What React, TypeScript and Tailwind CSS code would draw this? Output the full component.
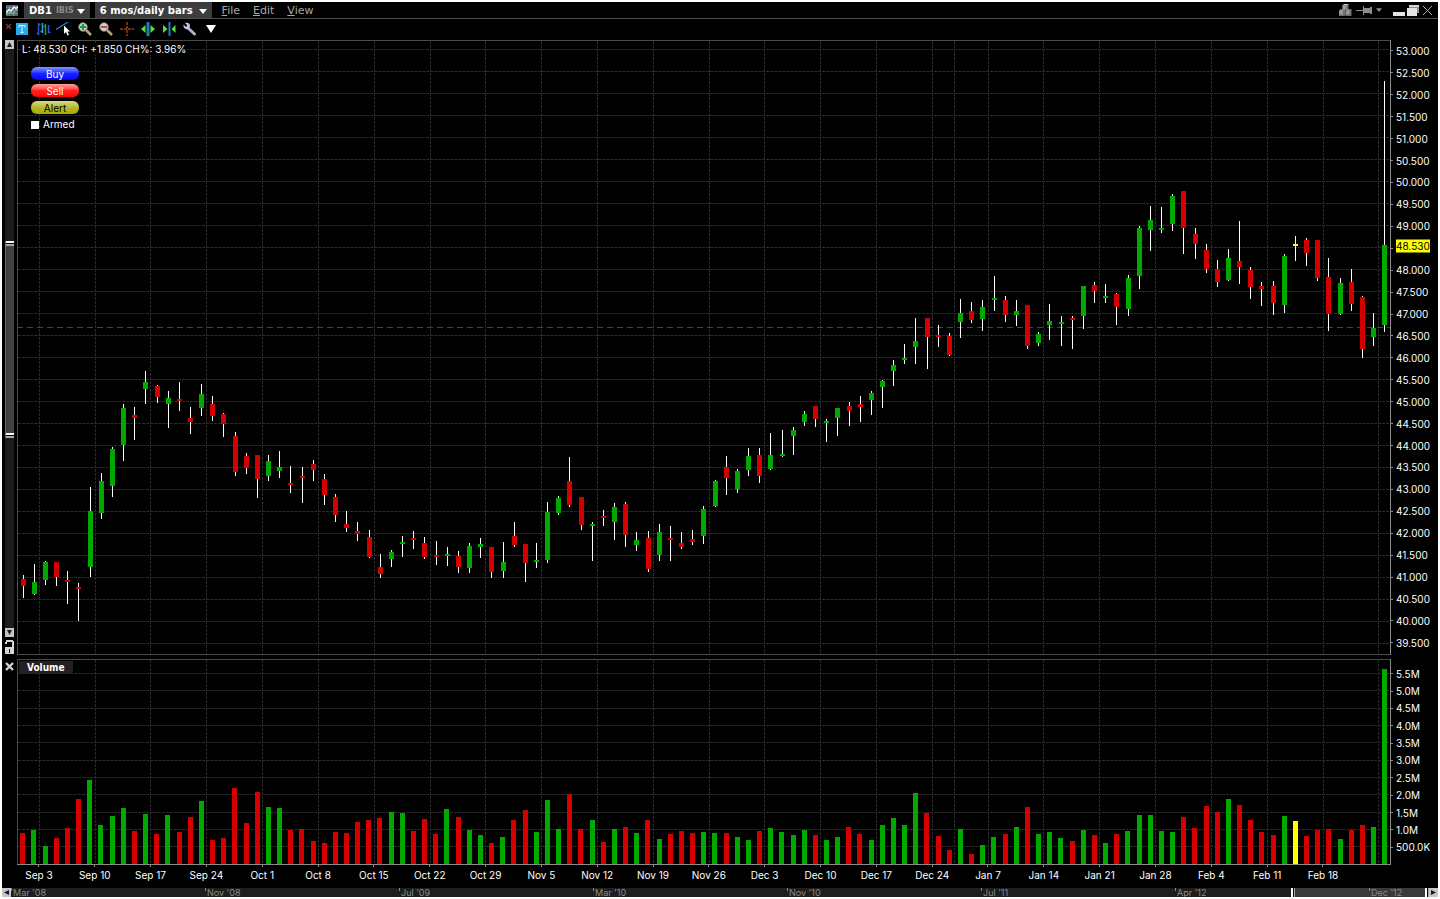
import type { ReactNode } from "react";
import clsx from "clsx";

type Tone = "g" | "r" | "y";
type Candle = [high: number, top: number, bottom: number, low: number, tone: Tone];

const TONES: Record<Tone, string> = { g: "#00a800", r: "#d40000", y: "#ffff00" };

const CANDLES: Candle[] = [
  [575, 579, 586, 598, "r"], [564, 582, 594, 595, "g"], [561, 562, 580, 585, "g"], [562, 562, 577, 586, "r"],
  [571, 580, 582, 604, "r"], [583, 587, 589, 621, "r"], [487, 511, 567, 577, "g"], [473, 481, 513, 519, "g"],
  [447, 449, 486, 497, "g"], [404, 408, 445, 461, "g"], [407, 415, 418, 440, "r"], [371, 382, 389, 404, "g"],
  [385, 386, 397, 403, "r"], [391, 398, 404, 428, "g"], [382, 399, 401, 411, "r"], [407, 418, 422, 434, "r"],
  [384, 394, 408, 416, "g"], [396, 404, 416, 421, "r"], [413, 414, 424, 437, "r"], [432, 436, 472, 476, "r"],
  [453, 456, 468, 474, "r"], [455, 455, 479, 498, "r"], [455, 461, 476, 481, "g"], [451, 467, 471, 478, "g"],
  [466, 483, 485, 493, "r"], [467, 476, 478, 503, "r"], [460, 464, 470, 481, "r"], [474, 479, 495, 505, "r"],
  [494, 497, 515, 522, "r"], [511, 524, 528, 532, "r"], [522, 531, 534, 541, "r"], [530, 537, 557, 558, "r"],
  [554, 567, 574, 578, "r"], [550, 552, 559, 567, "g"], [536, 542, 544, 557, "g"], [531, 538, 540, 549, "r"],
  [537, 543, 557, 559, "r"], [541, 555, 557, 565, "r"], [547, 554, 556, 566, "g"], [551, 556, 567, 573, "r"],
  [543, 546, 568, 573, "g"], [538, 544, 547, 558, "g"], [547, 547, 572, 578, "r"], [542, 562, 571, 578, "g"],
  [522, 536, 545, 547, "r"], [544, 544, 563, 582, "r"], [543, 560, 562, 568, "g"], [502, 512, 560, 563, "g"],
  [496, 498, 513, 515, "g"], [457, 481, 505, 507, "r"], [497, 497, 525, 530, "r"], [522, 524, 526, 561, "g"],
  [510, 516, 518, 526, "r"], [503, 507, 522, 540, "g"], [502, 504, 535, 547, "r"], [532, 540, 545, 551, "g"],
  [531, 538, 569, 572, "r"], [524, 532, 555, 561, "g"], [526, 538, 540, 561, "r"], [532, 543, 547, 549, "r"],
  [530, 539, 542, 545, "r"], [506, 509, 536, 544, "g"], [480, 481, 506, 507, "g"], [456, 467, 478, 495, "r"],
  [469, 471, 489, 493, "g"], [448, 456, 470, 476, "g"], [448, 455, 476, 483, "r"], [433, 455, 469, 470, "g"],
  [430, 454, 456, 457, "g"], [427, 430, 436, 455, "g"], [411, 414, 422, 426, "g"], [406, 406, 419, 427, "r"],
  [419, 421, 423, 442, "g"], [408, 408, 418, 436, "g"], [402, 406, 411, 426, "r"], [396, 404, 407, 422, "r"],
  [391, 393, 400, 415, "g"], [380, 381, 387, 408, "g"], [360, 365, 371, 386, "g"], [344, 358, 360, 364, "g"],
  [318, 341, 347, 364, "g"], [318, 318, 337, 369, "r"], [325, 335, 337, 347, "r"], [333, 336, 355, 356, "r"],
  [299, 313, 322, 338, "g"], [302, 311, 320, 323, "r"], [300, 307, 319, 331, "g"], [276, 298, 300, 311, "g"],
  [296, 300, 315, 322, "r"], [300, 311, 315, 326, "g"], [305, 305, 346, 349, "r"], [332, 334, 343, 346, "g"],
  [304, 321, 325, 340, "g"], [316, 322, 324, 346, "g"], [316, 318, 320, 349, "r"], [286, 286, 316, 329, "g"],
  [282, 285, 291, 303, "r"], [284, 296, 298, 303, "g"], [293, 294, 307, 325, "r"], [275, 278, 309, 316, "g"],
  [226, 228, 276, 289, "g"], [206, 220, 230, 251, "g"], [207, 228, 230, 233, "g"], [194, 196, 224, 231, "g"],
  [191, 191, 228, 254, "r"], [228, 234, 244, 259, "r"], [244, 250, 269, 273, "r"], [260, 269, 282, 287, "r"],
  [249, 258, 280, 281, "g"], [221, 261, 267, 284, "r"], [267, 270, 287, 299, "r"], [282, 286, 289, 306, "r"],
  [281, 286, 303, 315, "r"], [254, 256, 305, 313, "g"], [236, 244, 246, 261, "y"], [238, 240, 253, 266, "r"],
  [240, 240, 278, 281, "r"], [258, 277, 314, 331, "r"], [278, 283, 314, 315, "g"], [269, 282, 304, 311, "r"],
  [296, 297, 349, 358, "r"], [313, 328, 337, 346, "g"], [81, 245, 325, 332, "g"],
];

// top edge of every volume bar, same order as the candles
const VOLUMES = [
  833, 830, 846, 838, 828, 799, 780, 825, 816, 808, 831, 814, 834, 815, 832, 817, 801, 840, 838, 788,
  823, 792, 807, 808, 830, 829, 841, 843, 832, 833, 822, 820, 818, 812, 813, 831, 819, 834, 809, 817,
  830, 835, 843, 837, 820, 810, 832, 800, 829, 794, 829, 820, 842, 829, 827, 833, 820, 839, 834, 831,
  833, 832, 833, 833, 837, 840, 831, 828, 832, 835, 830, 835, 840, 837, 827, 834, 840, 825, 818, 825,
  793, 813, 836, 850, 829, 854, 845, 837, 834, 827, 807, 834, 832, 838, 841, 830, 835, 843, 834, 831,
  815, 815, 831, 832, 817, 828, 806, 812, 799, 805, 820, 832, 835, 816, 821, 836, 830, 829, 839, 830,
  825, 827, 669,
];
const VOLUME_TONES =
  "rggrrrggggrgrgrrgrrrrrggrrrrrrrrrggrrrgrggrgrrgggrrgrgrgrgrrrggrggrggggrggrrggggg" +
  "rrrgrggrgrgggrgrgrgggggrrrrgrrrrgyrrrgrrgg";

const DATES = [
  "Sep 3", "Sep 10", "Sep 17", "Sep 24", "Oct 1", "Oct 8", "Oct 15", "Oct 22", "Oct 29", "Nov 5", "Nov 12", "Nov 19",
  "Nov 26", "Dec 3", "Dec 10", "Dec 17", "Dec 24", "Jan 7", "Jan 14", "Jan 21", "Jan 28", "Feb 4", "Feb 11", "Feb 18",
];
const GRID_X = [
  39, 95, 150, 206, 262, 318, 374, 430, 485, 541, 597, 653, 709, 764, 820, 876, 932, 954, 988, 1043, 1099, 1155, 1211,
  1267, 1323, 1378,
];
const PRICES = Array.from({ length: 28 }, (_, i) => 53 - i * 0.5);
const PRICE_Y = PRICES.map((_, i) => Math.floor(49.7 + i * 21.98));
const VOLUME_LABELS = ["5.5M", "5.0M", "4.5M", "4.0M", "3.5M", "3.0M", "2.5M", "2.0M", "1.5M", "1.0M", "500.0K"];
const VOLUME_Y = VOLUME_LABELS.map((_, i) => Math.floor(673.5 + i * 17.33));
const HISTORY = ["Mar '08", "Nov '08", "Jul '09", "Mar '10", "Nov '10", "Jul '11", "Apr '12", "Dec '12"];

const LAST = 48.53;

function Grid({ ys, top, bottom }: { ys: number[]; top: number; bottom: number }) {
  return (
    <g stroke="#2a2a2a" strokeDasharray="3 1">
      {ys.map((y) => (
        <line key={y} x1={18} x2={1390} y1={y + 0.5} y2={y + 0.5} />
      ))}
      {GRID_X.map((x) => (
        <line key={x} x1={x + 0.5} x2={x + 0.5} y1={top} y2={bottom} />
      ))}
    </g>
  );
}

function PriceChart() {
  return (
    <svg
      viewBox="17 40 1374 615"
      preserveAspectRatio="none"
      shapeRendering="crispEdges"
      className="block h-full w-full"
      aria-label="Daily bars"
    >
      <Grid ys={PRICE_Y} top={41} bottom={654} />
      <line x1={17} x2={1390} y1={327.5} y2={327.5} stroke="#444" strokeDasharray="6 4" />
      {CANDLES.map(([high, top, bottom, low, tone], i) => {
        const x = Math.floor(23.1 + i * 11.161);
        return (
          <g key={i}>
            <rect x={x} y={high} width={1} height={low - high} fill="#fff" />
            <rect x={x - 2} y={top} width={5} height={bottom - top} fill={TONES[tone]} />
          </g>
        );
      })}
      <path d="M17.5 655V40.5H1390M17 654.5H1390" fill="none" stroke="#4a4a4a" />
      <path d="M1390.5 40V655" stroke="#8c8c8c" />
    </svg>
  );
}

function VolumeChart() {
  return (
    <svg
      viewBox="17 659 1374 206"
      preserveAspectRatio="none"
      shapeRendering="crispEdges"
      className="block h-full w-full"
      aria-label="Volume bars"
    >
      <Grid ys={VOLUME_Y} top={660} bottom={864} />
      {VOLUMES.map((y, i) => (
        <rect
          key={i}
          x={Math.floor(20.77 + i * 11.163)}
          y={y}
          width={5}
          height={864 - y}
          fill={TONES[VOLUME_TONES[i] as Tone]}
        />
      ))}
      <path d="M17.5 865V659.5H1390" fill="none" stroke="#4a4a4a" />
      <path d="M1390.5 659V865M17 864.5H1391" fill="none" stroke="#8c8c8c" />
    </svg>
  );
}

function Axis({ children, className }: { children: ReactNode; className?: string }) {
  return <div className={clsx("relative flex w-[47px] shrink-0 flex-col", className)}>{children}</div>;
}

function AxisLabel({ children, hidden }: { children: ReactNode; hidden?: boolean }) {
  return (
    <div className="flex min-h-0 flex-1 items-center gap-[3px]">
      <span className="h-px w-[2px] bg-[#8c8c8c]" />
      <span className={clsx("leading-3", hidden && "invisible")}>{children}</span>
    </div>
  );
}

function ToolButton({ label, children }: { label: string; children: ReactNode }) {
  return (
    <button aria-label={label} className="flex h-4 w-[21px] items-center justify-center">
      <svg width="16" height="14" viewBox="0 0 16 14">
        {children}
      </svg>
    </button>
  );
}

function Magnifier({ tone, plus }: { tone: string; plus?: boolean }) {
  return (
    <>
      <path d="M9 8l5 5" stroke="#b9a070" strokeWidth="2.600" />
      <circle cx="6" cy="5" r="4.200" fill="#cfd9d6" stroke="#858585" />
      <path d={plus ? "M3 5h6M6 2v6" : "M3 5h6"} stroke={tone} strokeWidth="2.200" />
    </>
  );
}

function Caret({ className, small }: { className?: string; small?: boolean }) {
  return (
    <svg width={small ? 6 : 8} height={small ? 4 : 5} viewBox="0 0 8 5" className={className}>
      <path d="M0 0h8L4 5z" fill="currentColor" />
    </svg>
  );
}

const TAB = "flex h-4 items-center bg-[#3d3d3d] pt-[2px] text-[10px] font-bold text-white";

function Header() {
  return (
    <header className="flex h-[17px] shrink-0 items-center border-b border-[#4f4f4f] pl-1 font-['DejaVu_Sans',sans-serif] text-[11px] leading-4">
      <svg width="12" height="11" viewBox="0 0 12 11" className="mr-[6px]">
        <rect width="12" height="11" fill="#4f6470" />
        <path d="M0 2.500h12M0 5.500h12M0 8.500h12M3.500 0v11M7.500 0v11" stroke="#8ba0aa" strokeWidth=".6" />
        <path d="M0 8l3-3.500 2 1.500 3-4 2 1.500 2-2" fill="none" stroke="#eaf7ff" strokeWidth="1.500" />
        <path d="M0 10l4-3 3 1.500 5-5" fill="none" stroke="#7ec98a" />
      </svg>
      <button className={clsx(TAB, "mr-[5px] px-[5px]")}>
        DB1
        <span className="ml-1 text-[8px] text-[#8a8a8a]">IBIS</span>
        <Caret className="ml-[3px] text-white" />
      </button>
      <button className={clsx(TAB, "mr-[10px] px-[5px]")}>
        6 mos/daily bars
        <Caret className="ml-[6px] text-white" />
      </button>
      <nav className="flex gap-[13px] pt-[2px] text-[#a8a8a8]">
        {["File", "Edit", "View"].map((item) => (
          <button key={item}>
            <span className="underline">{item[0]}</span>
            {item.slice(1)}
          </button>
        ))}
      </nav>
      <div className="ml-auto flex items-center pr-[6px] text-[#8c8c8c]">
        <button aria-label="Group" className="mr-1">
          <svg width="13" height="13" viewBox="0 0 13 13">
            <path d="M3.500 1h6v5h-6zM0 6.500h6V12H0zM6.500 6.500h6V12h-6z" fill="#6e6e6e" />
            <path d="M3.500 1h4v4h-4zM0 6.500h4v4H0zM6.500 6.500h4v4h-4z" fill="#9a9a9a" />
            <path d="M4.500 0h5v1h-5zM1 5.500h5v1H1zM7.500 5.500h5v1h-5z" fill="#bdbdbd" />
          </svg>
        </button>
        <button aria-label="Pin" className="mr-1">
          <svg width="16" height="9" viewBox="0 0 16 9" shapeRendering="crispEdges">
            <path d="M0 4h7v1H0zM7 0h1v9H7zM8 2h6v5H8zM14 1h2v7h-2z" fill="#8c8c8c" />
          </svg>
        </button>
        <Caret className="mr-[11px] text-[#8c8c8c]" small />
        <button aria-label="Minimize" className="mt-[7px] mr-[2px] h-[4px] w-3 bg-[#e4e4e4]" />
        <button aria-label="Restore" className="mr-1">
          <svg width="12" height="11" viewBox="0 0 12 11" shapeRendering="crispEdges">
            <path d="M2 0h10v8H2z" fill="#8f8f8f" />
            <path d="M2 0h10v2H2z" fill="#d8d8d8" />
            <path d="M0 3h10v8H0z" fill="#e4e4e4" />
          </svg>
        </button>
        <button aria-label="Close">
          <svg width="9" height="9" viewBox="0 0 9 9">
            <path d="M0 0l9 9M9 0L0 9" stroke="#aaa" />
          </svg>
        </button>
      </div>
    </header>
  );
}

function Toolbar() {
  return (
    <div className="flex h-[21px] shrink-0 items-center pb-[2px]">
      <button aria-label="Close toolbar" className="mb-[5px] ml-1">
        <svg width="5" height="5" viewBox="0 0 5 5">
          <path d="M0 0l5 5M5 0L0 5" stroke="#8a3a30" strokeWidth="1.300" />
        </svg>
      </button>
      <ToolButton label="Text">
        <rect x="2" y="1" width="12" height="12" fill="#29a9ea" />
        <path d="M5 5.500v-2h6v2M8 3.500v7M6.500 10.500h3" fill="none" stroke="#e9f8ff" />
      </ToolButton>
      <ToolButton label="Bar type">
        <path d="M3.500 1v12M1.500 11.500h2M3.500 2.500h2" stroke="#2f55d8" strokeWidth="1.500" fill="none" />
        <path d="M7.500 1v10M5.500 9.500h2" stroke="#35a5c9" strokeWidth="1.500" fill="none" />
        <path d="M10.500 2v11M8.500 4.500h2" stroke="#2c9a3e" strokeWidth="1.500" fill="none" />
        <path d="M13.500 3v8M13.500 10.500h2" stroke="#2f55d8" strokeWidth="1.500" />
      </ToolButton>
      <ToolButton label="Trend line">
        <path d="M0 7.500L12 0" stroke="#2f86bd" strokeWidth="1.200" />
        <path d="M8 3.500v8.500l2-2 1.500 3.500 1.500-.7-1.500-3.300H14z" fill="#fff" />
      </ToolButton>
      <ToolButton label="Zoom in">
        <Magnifier tone="#1f9a2d" plus />
      </ToolButton>
      <ToolButton label="Zoom out">
        <Magnifier tone="#d8442f" />
      </ToolButton>
      <ToolButton label="Crosshair">
        <path d="M8 0v14M1 7h14" stroke="#6b3310" strokeWidth="2" strokeDasharray="3 1" />
      </ToolButton>
      <ToolButton label="Widen bars">
        <path d="M5.500 3v8L1 7zM10.500 3v8L15 7z" fill="#55e03c" />
        <path d="M8 0v14" stroke="#1b7fc0" strokeWidth="3" />
      </ToolButton>
      <ToolButton label="Narrow bars">
        <path d="M2 3v8l4.500-4zM14.500 3v8L10.500 7z" fill="#55e03c" />
        <path d="M8.500 0v14" stroke="#1b7fc0" strokeWidth="2" />
      </ToolButton>
      <ToolButton label="Settings">
        <path d="M6 6l6.500 6" stroke="#a9b6cf" strokeWidth="3" strokeLinecap="round" />
        <path d="M3 1l2.500 2.500L4 5 1.500 2.500C1 5 3 8 6 7l2-2.500C8.500 2 6 0 3 1z" fill="#c3cde0" />
      </ToolButton>
      <ToolButton label="More tools">
        <path d="M3 3h10l-5 8z" fill="#fff" />
      </ToolButton>
    </div>
  );
}

function ScrollButton({ label, path }: { label: string; path: string }) {
  return (
    <button aria-label={label} className="flex h-[9px] w-[9px] shrink-0 items-center justify-center bg-[#c6c6c6]">
      <svg width="5" height="5" viewBox="0 0 5 5">
        <path d={path} fill="#101c2c" />
      </svg>
    </button>
  );
}

function Handle() {
  return <span className="h-[5px] w-full shrink-0 border-y-2 border-t-white border-b-[#a8a8a8] bg-black" />;
}

function PriceScroll() {
  return (
    <div className="flex w-[15px] shrink-0 flex-col items-center">
      <ScrollButton label="Scroll up" path="M0 5h5L2.500 0z" />
      <div className="flex w-[9px] flex-1 flex-col bg-[#1c1c1c]">
        <div className="flex-[192]" />
        <div className="flex flex-[197] flex-col justify-between border-l border-[#6a6a6a] bg-[#414141]">
          <Handle />
          <Handle />
        </div>
        <div className="flex-[190]" />
      </div>
      <ScrollButton label="Scroll down" path="M0 0h5L2.500 5z" />
      <button aria-label="Lock scale" className="mt-[3px]">
        <svg width="9" height="15" viewBox="0 0 9 15" shapeRendering="crispEdges" className="block">
          <path d="M0 2h2v2H0zM1 0h7v2H1zM7 1h2v7H7zM0 7h9v7H0z" fill="#d6d6d6" />
          <path d="M4 9h1v4H4z" fill="#000" />
        </svg>
      </button>
    </div>
  );
}

const PILL = "h-[13px] w-12 rounded-[6px] text-center leading-3";

function TradePanel() {
  return (
    <div className="absolute top-[27px] left-[14px] flex flex-col items-start gap-1">
      <button className={clsx(PILL, "bg-linear-to-b from-[#8c8cff] via-[#2020ff] to-[#0000ff] text-white")}>Buy</button>
      <button className={clsx(PILL, "bg-linear-to-b from-[#ff9c9c] via-[#ff2020] to-[#ff0000] text-white")}>Sell</button>
      <button className={clsx(PILL, "bg-linear-to-b from-[#d8d88c] via-[#b8b820] to-[#a8a800] text-black")}>Alert</button>
      <label className="flex h-[13px] items-center gap-1 text-white">
        <input type="checkbox" className="h-2 w-2 appearance-none bg-white checked:bg-blue-600" />
        Armed
      </label>
    </div>
  );
}

function History() {
  return (
    <div className="flex h-[9px] shrink-0 overflow-hidden">
      <ScrollButton label="Earlier" path="M5 0v5L0 2.500z" />
      <div className="relative flex-1 bg-[#1e1e1e]">
        <div className="absolute inset-y-0 right-0 flex w-[138px] justify-between bg-[#3a3a3a]">
          <span className="w-[4px] border-r border-l-2 border-r-[#a8a8a8] border-l-white bg-black" />
          <span className="w-[4px] border-r border-l-2 border-r-[#a8a8a8] border-l-white bg-black" />
        </div>
        <div className="relative grid h-full grid-cols-[repeat(7,194fr)_60fr] text-[9px] leading-[9px] text-[#8a8a8a]">
          {HISTORY.map((item) => (
            <span key={item} className="flex gap-px whitespace-nowrap">
              <span className="h-[3px] w-px bg-[#8a8a8a]" />
              {item}
            </span>
          ))}
        </div>
      </div>
      <ScrollButton label="Later" path="M0 0v5l5-2.500z" />
    </div>
  );
}

export default function App() {
  return (
    <div className="h-screen bg-white p-[2px] font-['Inter','Liberation_Sans',sans-serif] text-[10px] text-white">
      <main className="flex h-full flex-col bg-black">
        <Header />
        <Toolbar />

        <section className="flex min-h-0 flex-[615]">
          <PriceScroll />
          <div className="relative min-w-0 flex-1">
            <PriceChart />
            <p className="absolute top-[3px] left-1 bg-black px-px leading-3">L: 48.530 CH: +1.850 CH%: 3.96%</p>
            <TradePanel />
          </div>
          <Axis className="pb-px">
            {PRICES.map((price) => (
              <AxisLabel key={price} hidden={price === 48.5}>
                {price.toFixed(3)}
              </AxisLabel>
            ))}
            <span
              className="absolute left-[5px] -translate-y-1/2 bg-[#ffff00] leading-[13px] text-black"
              style={{ top: `${((53.22 - LAST) / 14) * 100}%` }}
            >
              {LAST.toFixed(3)}
            </span>
          </Axis>
        </section>

        <section className="mt-1 flex min-h-0 flex-[206]">
          <div className="flex w-[15px] shrink-0 items-start justify-center pt-[3px]">
            <button aria-label="Close volume">
              <svg width="9" height="9" viewBox="0 0 9 9" className="block">
                <path d="M1 1l7 7M8 1L1 8" stroke="#d0d0d0" strokeWidth="2.400" />
              </svg>
            </button>
          </div>
          <div className="relative min-w-0 flex-1">
            <VolumeChart />
            <h2 className="absolute top-[2px] left-[2px] bg-[#222] px-2 font-['DejaVu_Sans_Condensed','DejaVu_Sans',sans-serif] leading-[13px] font-bold">
              Volume
            </h2>
          </div>
          <Axis className="pt-[6px] pb-[9px]">
            {VOLUME_LABELS.map((label) => (
              <AxisLabel key={label}>{label}</AxisLabel>
            ))}
          </Axis>
        </section>

        <div className="flex h-[23px] shrink-0 pr-[87px] pl-[9px]">
          {DATES.map((date) => (
            <div key={date} className="flex min-w-0 flex-1 flex-col items-center gap-[2px] whitespace-nowrap">
              <span className="h-[2px] w-px bg-[#8c8c8c]" />
              <span className="leading-3">{date}</span>
            </div>
          ))}
        </div>
        <History />
      </main>
    </div>
  );
}
